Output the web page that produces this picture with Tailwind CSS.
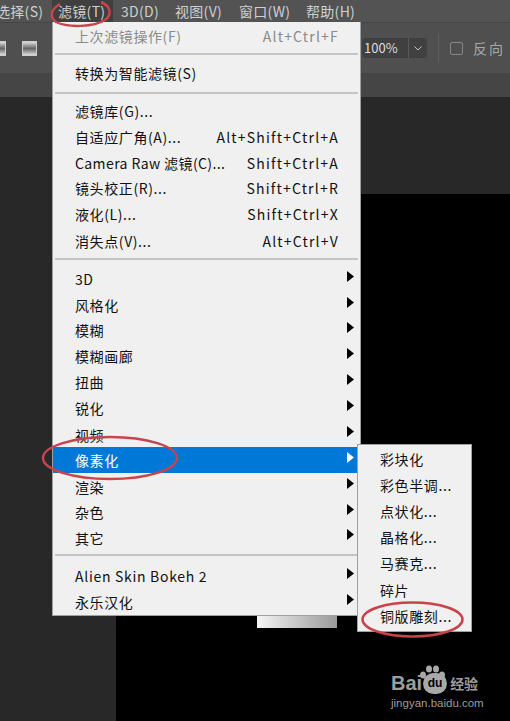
<!DOCTYPE html>
<html lang="en">
<head>
    <meta charset="UTF-8">
    <meta name="viewport" content="width=device-width, initial-scale=1.0">
    <title>滤镜菜单</title>
    <script src="https://cdn.jsdelivr.net/npm/@tailwindcss/browser@4"></script>
</head>
<body class="bg-[#282828]">
<div class="relative w-[510px] h-[721px] overflow-hidden flex flex-col font-['Noto_Sans_CJK_SC','Liberation_Sans',sans-serif] text-[14px] tracking-[0.3px]">

    <!-- Menu bar -->
    <div class="h-[22px] shrink-0 bg-[#535353] text-[#d0d0d0] flex items-center leading-none">
        <span class="ml-[-4px] w-[56px] shrink-0">选择(S)</span>
        <span class="w-[61px] h-full shrink-0 bg-[#3f3f3f] pl-[6px] flex items-center">滤镜(T)</span>
        <span class="ml-[8px] w-[54px] shrink-0">3D(D)</span>
        <span class="w-[64px] shrink-0">视图(V)</span>
        <span class="w-[67px] shrink-0">窗口(W)</span>
        <span class="shrink-0">帮助(H)</span>
    </div>

    <!-- Options bar -->
    <div class="h-[51px] shrink-0 bg-[#4f4f4f] border-t border-[#464646] flex items-center text-[#c8c8c8]">
        <div class="ml-[-9px] w-[15px] h-[15px] bg-gradient-to-b from-[#ddd] via-[#666] to-[#ddd] border border-[#ccc]"></div>
        <div class="ml-[16px] w-[15px] h-[15px] bg-gradient-to-b from-[#ddd] via-[#666] to-[#ddd] border border-[#ccc]"></div>
        <div class="ml-auto w-[65px] h-[20px] flex text-[13px] leading-[20px] bg-[#404040] rounded-sm overflow-hidden mr-[11px]">
            <span class="w-[46px] pl-[2px] text-[#ddd] tracking-normal">100%</span>
            <span class="flex-1 border-l border-[#5a5a5a] flex items-center justify-center">
                <svg width="8" height="5" viewBox="0 0 8 5" fill="none" stroke="#c8c8c8" stroke-width="1"><path d="M0.5 0.5 L4 4 L7.5 0.5"/></svg>
            </span>
        </div>
        <div class="w-px h-[30px] bg-[#5f5f5f] mr-[11px]"></div>
        <div class="w-[13px] h-[13px] border border-[#888] rounded-[2px] mr-[10px]"></div>
        <span class="w-[37px] tracking-[2px] text-[#a8a8a8] shrink-0">反向</span>
    </div>

    <!-- Tab strip -->
    <div class="h-[24px] shrink-0 bg-[#454545]"></div>

    <!-- Workspace with the black canvas -->
    <div class="flex-1 pl-[116px] pt-[97px] flex">
        <div class="flex-1 bg-black"></div>
    </div>

    <!-- Gradient swatch peeking out under the menu -->
    <div class="absolute left-[257px] top-[616px] w-[80px] h-[12px] bg-gradient-to-r from-[#f5f5f5] to-[#9a9a9a]"></div>

    <!-- Filter menu -->
    <div class="absolute left-[52px] top-[22px] w-[309px] h-[594px] bg-[#f0f0f0] border-r border-b border-l border-[#a0a0a0] text-[#111] tracking-[0.6px] flex flex-col pt-[4px]">
        <div class="h-[22px] flex items-center justify-between pl-[22px] pr-[21px] text-[#8a8a8a]"><span>上次滤镜操作(F)</span><span class="tracking-[1.2px]">Alt+Ctrl+F</span></div>
        <div class="h-[2px] mt-[5px] mb-[6px] mx-[2px] bg-[#c4c4c4]"></div>
        <div class="h-[26px] flex items-center pl-[22px]">转换为智能滤镜(S)</div>
        <div class="h-[2px] mt-[5px] mb-[5px] mx-[2px] bg-[#c4c4c4]"></div>
        <div class="h-[25.8px] flex items-center pl-[22px]">滤镜库(G)...</div>
        <div class="h-[25.8px] flex items-center justify-between pl-[22px] pr-[21px]"><span>自适应广角(A)...</span><span class="tracking-[1.2px]">Alt+Shift+Ctrl+A</span></div>
        <div class="h-[25.8px] flex items-center justify-between pl-[22px] pr-[21px]"><span class="tracking-[0.4px]">Camera Raw 滤镜(C)...</span><span class="tracking-[1.2px]">Shift+Ctrl+A</span></div>
        <div class="h-[25.8px] flex items-center justify-between pl-[22px] pr-[21px]"><span>镜头校正(R)...</span><span class="tracking-[1.2px]">Shift+Ctrl+R</span></div>
        <div class="h-[25.8px] flex items-center justify-between pl-[22px] pr-[21px]"><span>液化(L)...</span><span class="tracking-[1.2px]">Shift+Ctrl+X</span></div>
        <div class="h-[26px] mt-[1px] flex items-center justify-between pl-[22px] pr-[21px]"><span>消失点(V)...</span><span class="tracking-[1.2px]">Alt+Ctrl+V</span></div>
        <div class="h-[2px] mt-[4px] mb-[6px] mx-[2px] bg-[#c4c4c4]"></div>
        <div class="h-[25.9px] flex items-center justify-between pl-[22px] pr-[6px]"><span>3D</span><svg class="mb-[6px]" width="7" height="11" viewBox="0 0 7 11"><path d="M0 0 L7 5.5 L0 11Z" fill="#000"/></svg></div>
        <div class="h-[25.9px] flex items-center justify-between pl-[22px] pr-[6px]"><span>风格化</span><svg class="mb-[6px]" width="7" height="11" viewBox="0 0 7 11"><path d="M0 0 L7 5.5 L0 11Z" fill="#000"/></svg></div>
        <div class="h-[25.9px] flex items-center justify-between pl-[22px] pr-[6px]"><span>模糊</span><svg class="mb-[6px]" width="7" height="11" viewBox="0 0 7 11"><path d="M0 0 L7 5.5 L0 11Z" fill="#000"/></svg></div>
        <div class="h-[25.9px] flex items-center justify-between pl-[22px] pr-[6px]"><span>模糊画廊</span><svg class="mb-[6px]" width="7" height="11" viewBox="0 0 7 11"><path d="M0 0 L7 5.5 L0 11Z" fill="#000"/></svg></div>
        <div class="h-[25.9px] flex items-center justify-between pl-[22px] pr-[6px]"><span>扭曲</span><svg class="mb-[6px]" width="7" height="11" viewBox="0 0 7 11"><path d="M0 0 L7 5.5 L0 11Z" fill="#000"/></svg></div>
        <div class="h-[25.9px] flex items-center justify-between pl-[22px] pr-[6px]"><span>锐化</span><svg class="mb-[6px]" width="7" height="11" viewBox="0 0 7 11"><path d="M0 0 L7 5.5 L0 11Z" fill="#000"/></svg></div>
        <div class="h-[25.9px] flex items-center justify-between pl-[22px] pr-[6px]"><span class="mt-[2px]">视频</span><svg class="mb-[6px]" width="7" height="11" viewBox="0 0 7 11"><path d="M0 0 L7 5.5 L0 11Z" fill="#000"/></svg></div>
        <div class="h-[25.9px] flex items-center justify-between pl-[22px] pr-[6px] bg-[#0078d7] text-white"><span class="mt-[2px]">像素化</span><svg class="mb-[4px]" width="7" height="11" viewBox="0 0 7 11"><path d="M0 0 L7 5.5 L0 11Z" fill="#fff"/></svg></div>
        <div class="h-[25.9px] flex items-center justify-between pl-[22px] pr-[6px]"><span class="mt-[3px]">渲染</span><svg class="mb-[5px]" width="7" height="11" viewBox="0 0 7 11"><path d="M0 0 L7 5.5 L0 11Z" fill="#000"/></svg></div>
        <div class="h-[25.9px] flex items-center justify-between pl-[22px] pr-[6px]"><span class="mt-[2px]">杂色</span><svg class="mb-[5px]" width="7" height="11" viewBox="0 0 7 11"><path d="M0 0 L7 5.5 L0 11Z" fill="#000"/></svg></div>
        <div class="h-[25.9px] flex items-center justify-between pl-[22px] pr-[6px]"><span class="mt-[2px]">其它</span><svg class="mb-[6px]" width="7" height="11" viewBox="0 0 7 11"><path d="M0 0 L7 5.5 L0 11Z" fill="#000"/></svg></div>
        <div class="h-[2px] mt-[4px] mb-[7px] mx-[2px] bg-[#c4c4c4]"></div>
        <div class="h-[26px] flex items-center justify-between pl-[22px] pr-[6px]"><span class="tracking-[0.7px]">Alien Skin Bokeh 2</span><svg class="mb-[6px]" width="7" height="11" viewBox="0 0 7 11"><path d="M0 0 L7 5.5 L0 11Z" fill="#000"/></svg></div>
        <div class="h-[26px] flex items-center justify-between pl-[22px] pr-[6px]"><span>永乐汉化</span><svg class="mb-[6px]" width="7" height="11" viewBox="0 0 7 11"><path d="M0 0 L7 5.5 L0 11Z" fill="#000"/></svg></div>
    </div>

    <!-- Pixelate submenu -->
    <div class="absolute left-[357px] top-[444px] w-[115px] h-[188px] bg-[#f0f0f0] border border-[#a0a0a0] text-[#111] tracking-[0.6px] flex flex-col pl-[22px] pt-[1px]">
        <div class="h-[26.2px] flex items-center">彩块化</div>
        <div class="h-[26.2px] flex items-center">彩色半调...</div>
        <div class="h-[26.2px] flex items-center">点状化...</div>
        <div class="h-[26.2px] flex items-center">晶格化...</div>
        <div class="h-[26.2px] flex items-center">马赛克...</div>
        <div class="h-[26.2px] flex items-center">碎片</div>
        <div class="h-[26.2px] flex items-center">铜版雕刻...</div>
    </div>

    <!-- Red hand-drawn annotations -->
    <svg class="absolute left-0 top-0 pointer-events-none" width="510" height="721" fill="none" stroke="#c9434a" stroke-width="2.5">
        <path d="M60 4 C51 9 49 17 56 22 C68 28 94 27 105 20 C113 14 110 6 101 2"/>
        <ellipse cx="110" cy="458" rx="67" ry="21"/>
        <ellipse cx="412.5" cy="619.5" rx="50" ry="17"/>
    </svg>

    <!-- Baidu jingyan watermark -->
    <div class="absolute left-[391px] top-[670px] w-[112px] text-[#9d9d9d] font-['Liberation_Sans',sans-serif] tracking-normal">
        <div class="flex items-center h-[26px] leading-none">
            <span class="text-[20px] font-bold">Bai</span>
            <span class="relative w-[24px] h-[21px] ml-[1px] rounded-full bg-[#a8a8a8] text-black text-[12px] font-bold flex items-center justify-center">du</span>
            <span class="ml-[3px] text-[14px] font-['Noto_Sans_CJK_SC',sans-serif] font-bold">经验</span>
        </div>
        <div class="text-[11.5px] leading-[14px] whitespace-nowrap">jingyan.baidu.com</div>
        <svg class="absolute left-[27px] top-[-5px]" width="28" height="16" viewBox="0 0 28 16" fill="#a8a8a8">
            <ellipse cx="5" cy="10" rx="3" ry="3.5"/><ellipse cx="11" cy="4" rx="3" ry="3.5"/><ellipse cx="18" cy="4" rx="3" ry="3.5"/><ellipse cx="24" cy="10" rx="3" ry="3.5"/>
        </svg>
    </div>
</div>
</body>
</html>
